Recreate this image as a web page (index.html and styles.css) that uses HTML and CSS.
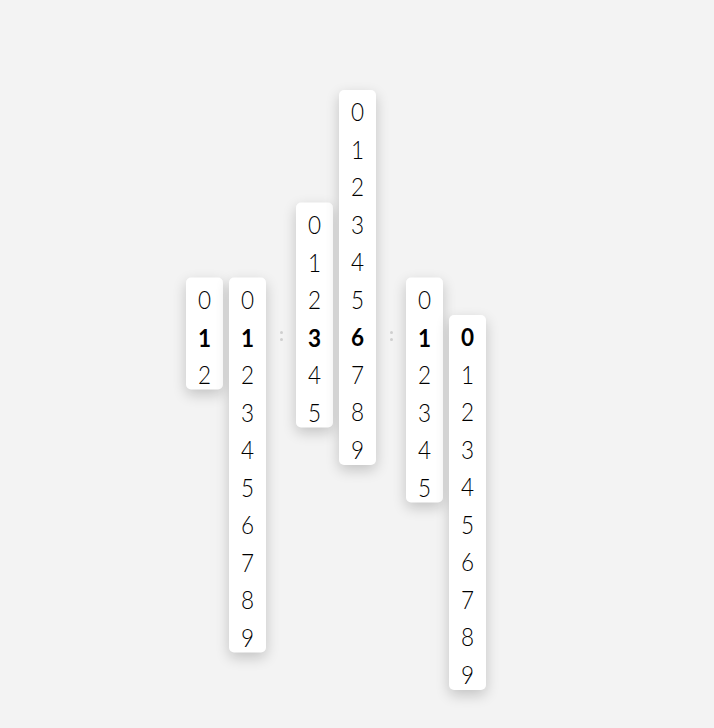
FILE: index.html
```html
<!DOCTYPE html>
<html>
<head>
<meta charset="utf-8">
<link rel="stylesheet" href="styles.css">
</head>
<body>
<div class="clock">
  <div class="group">
    <div class="col" style="transform: translateY(-37.5px)">
      <span>0</span><span class="on">1</span><span>2</span>
    </div>
    <div class="col" style="transform: translateY(-37.5px)">
      <span>0</span><span class="on">1</span><span>2</span><span>3</span><span>4</span><span>5</span><span>6</span><span>7</span><span>8</span><span>9</span>
    </div>
  </div>
  <div class="colon"><i></i><i></i></div>
  <div class="group">
    <div class="col" style="transform: translateY(-112.5px)">
      <span>0</span><span>1</span><span>2</span><span class="on">3</span><span>4</span><span>5</span>
    </div>
    <div class="col" style="transform: translateY(-225px)">
      <span>0</span><span>1</span><span>2</span><span>3</span><span>4</span><span>5</span><span class="on">6</span><span>7</span><span>8</span><span>9</span>
    </div>
  </div>
  <div class="colon"><i></i><i></i></div>
  <div class="group">
    <div class="col" style="transform: translateY(-37.5px)">
      <span>0</span><span class="on">1</span><span>2</span><span>3</span><span>4</span><span>5</span>
    </div>
    <div class="col" style="transform: translateY(0px)">
      <span class="on">0</span><span>1</span><span>2</span><span>3</span><span>4</span><span>5</span><span>6</span><span>7</span><span>8</span><span>9</span>
    </div>
  </div>
</div>
</body>
</html>
```
FILE: styles.css
```css
html, body {
  margin: 0;
  padding: 0;
  background: #f3f3f3;
  height: 100%;
  overflow: hidden;
}
.clock {
  display: flex;
  align-items: flex-start;
  padding-top: 314.5px;
  padding-left: 186px;
  font-family: Lato, "DejaVu Sans", sans-serif;
}
.group {
  display: flex;
  gap: 6px;
  align-items: flex-start;
}
.col {
  width: 37px;
  display: flex;
  flex-direction: column;
  background: #fff;
  border-radius: 5px;
  box-shadow: 0 5px 14px rgba(0, 0, 0, 0.2);
}
.col span {
  height: 37.5px;
  display: flex;
  align-items: center;
  justify-content: center;
  font-size: 25px;
  font-weight: 300;
  color: #000;
  padding-top: 6px;
  box-sizing: border-box;
  transform: scaleX(0.9);
}
.col span.on {
  font-weight: 700;
  color: #000;
}
.colon {
  width: 30px;
  height: 37.5px;
  display: flex;
  flex-direction: column;
  align-items: center;
  justify-content: center;
  gap: 4px;
  padding-top: 6px;
  box-sizing: border-box;
}
.colon i {
  width: 3px;
  height: 3px;
  border-radius: 50%;
  background: #cfcfcf;
}
```
